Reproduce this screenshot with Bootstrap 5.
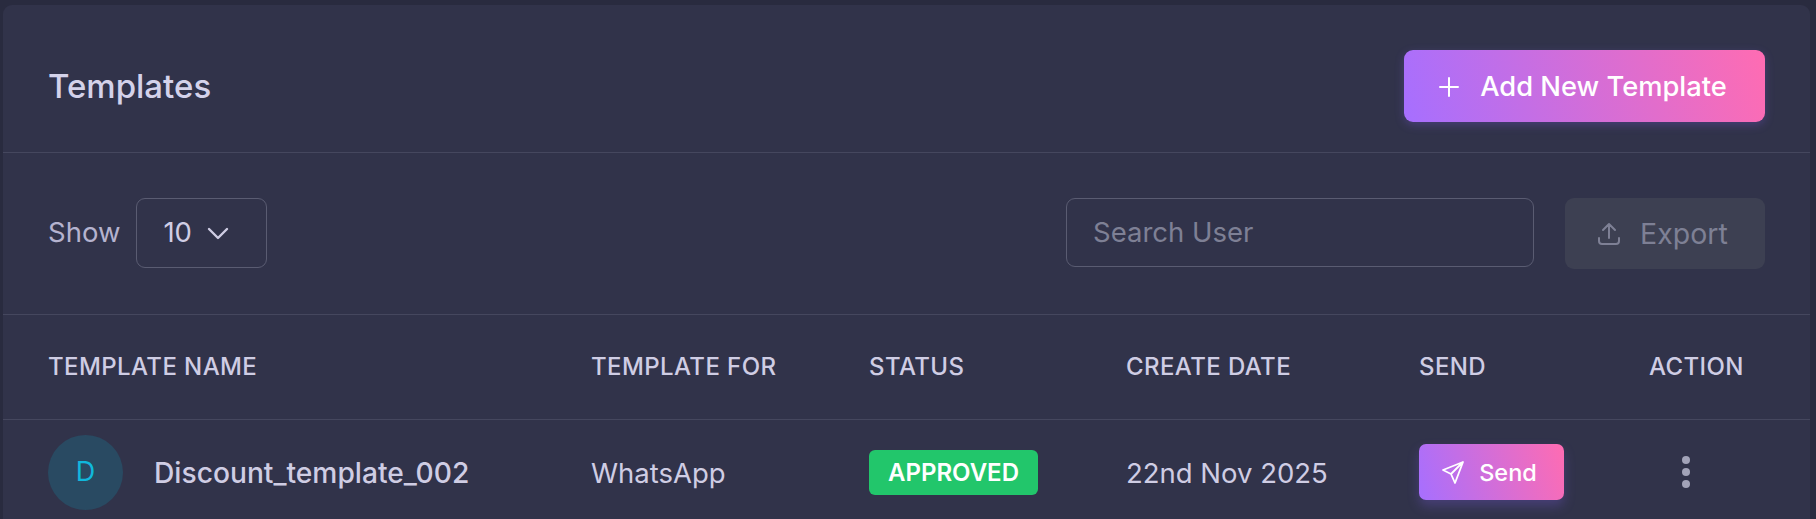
<!DOCTYPE html>
<html lang="en">
<head>
  <meta charset="UTF-8" />
  <meta name="viewport" content="width=device-width, initial-scale=1.0" />
  <title>Templates</title>
  <link rel="stylesheet" href="https://cdn.jsdelivr.net/npm/bootstrap@5.3.0/dist/css/bootstrap.min.css" />
  <style>
    html, body { height: 100%; overflow: hidden; }
    body { background: #292b3f; font-family: Inter, "Liberation Sans", sans-serif; color: #cfcde4; padding: 5px 6px 0 3px; }
    .panel { background: #31334a; border: 0; border-radius: 9px 9px 0 0; color: #cfcde4; }
    .panel-head { height: 148px; padding: 15px 45px 0; border-bottom: 1px solid #45475e; }
    .panel-title { font-size: 33px; font-weight: 500; color: #d4d2ea; margin: 0; padding-top: 2px; }
    .grad-btn { background: linear-gradient(72deg, #a66fff, #ff6cb2); color: #fff; border: 0; font-weight: 500; }
    .grad-btn:hover { color: #fff; }
    .add-btn { width: 361px; height: 72px; padding: 2px 4px 0 0; font-size: 27.3px; border-radius: 9px; gap: 20px; box-shadow: 0 3px 10px rgba(140, 100, 255, .25); }
    .filter-bar { height: 162px; padding: 0 45px 1px; border-bottom: 1px solid #45475e; }
    .show-label { font-size: 27.5px; color: #b5b3cf; }
    .show-select { width: 131px; height: 70px; border: 1px solid #5a5c72; border-radius: 9px; padding-left: 26px; gap: 15px; font-size: 27.5px; color: #cfcde4; }
    .search-box { width: 468px; height: 69px; margin-bottom: 2px; background: transparent; border: 1px solid #5a5c72; border-radius: 9px; padding: 0 26px; font-size: 27.5px; color: #cfcde4; }
    .search-box::placeholder { color: #7e8095; }
    .search-box:focus { background: transparent; color: #cfcde4; border-color: #5a5c72; box-shadow: none; }
    .export-btn { width: 200px; height: 71px; margin-left: 31px; padding: 2px 0 0 32px; background: #3d4052; color: #7e8095; border: 0; border-radius: 9px; font-size: 28.5px; gap: 19px; }
    .tpl-table { table-layout: fixed; width: 100%; margin: 0; --bs-table-bg: transparent; --bs-table-color: #cfcde4; --bs-table-border-color: #45475e; }
    .tpl-table th { height: 104px; padding: 0; vertical-align: middle; font-size: 24px; font-weight: 500; color: #cfcde4; letter-spacing: .4px; }
    .tpl-table td { height: 106px; padding: 0; vertical-align: middle; font-size: 27.5px; border-bottom: 0; }
    .tpl-table th:first-child, .tpl-table td:first-child { padding-left: 45px; }
    .tpl-table td.text-cell { padding-top: 2px; }
    .name-cell { gap: 31px; font-weight: 500; font-size: 28.2px; }
    .name-text { padding-top: 2px; }
    .avatar-tile { width: 75px; height: 75px; background: #294a62; color: #10b8dc; font-size: 27px; font-weight: 400; }
    .status-pill { width: 169px; height: 45px; padding-top: 1px; background: #22c66b; color: #fff; border-radius: 6px; font-size: 24px; font-weight: 600; }
    .send-btn { width: 145px; height: 56px; padding: 0 4px 0 0; font-size: 23.5px; border-radius: 7px; gap: 15px; box-shadow: 0 6px 12px rgba(140, 100, 255, .25); }
    .dots-icon { margin-left: 32px; display: block; }
  </style>
</head>
<body>
  <div class="card panel">
    <div class="panel-head d-flex align-items-center justify-content-between">
      <h5 class="panel-title">Templates</h5>
      <button type="button" class="btn grad-btn add-btn d-flex align-items-center justify-content-center">
        <svg width="22" height="22" viewBox="0 0 22 22" fill="none" stroke="#fff" stroke-width="2" stroke-linecap="round"><path d="M11 2v18M2 11h18"/></svg>
        Add New Template
      </button>
    </div>

    <div class="filter-bar d-flex align-items-center justify-content-between">
      <div class="d-flex align-items-center gap-3">
        <span class="show-label">Show</span>
        <div class="show-select d-flex align-items-center">
          10
          <svg width="22" height="14" viewBox="0 0 22 14" fill="none" stroke="#cfcde4" stroke-width="2.4" stroke-linecap="round" stroke-linejoin="round"><path d="M2 3l9 9 9-9"/></svg>
        </div>
      </div>
      <div class="d-flex align-items-center">
        <input type="text" class="form-control search-box" placeholder="Search User" />
        <button type="button" class="btn export-btn d-flex align-items-center">
          <svg width="24" height="24" viewBox="0 0 24 24" fill="none" stroke="#7e8095" stroke-width="2" stroke-linecap="round" stroke-linejoin="round"><path d="M12 16V2M6 8l6-6 6 6M2 16v3a3 3 0 0 0 3 3h14a3 3 0 0 0 3-3v-3"/></svg>
          Export
        </button>
      </div>
    </div>

    <table class="table tpl-table">
      <colgroup>
        <col style="width: 588px" />
        <col style="width: 278px" />
        <col style="width: 257px" />
        <col style="width: 293px" />
        <col style="width: 230px" />
        <col />
      </colgroup>
      <thead>
        <tr>
          <th>TEMPLATE NAME</th>
          <th>TEMPLATE FOR</th>
          <th>STATUS</th>
          <th>CREATE DATE</th>
          <th>SEND</th>
          <th>ACTION</th>
        </tr>
      </thead>
      <tbody>
        <tr>
          <td>
            <div class="name-cell d-flex align-items-center">
              <div class="avatar-tile rounded-circle d-flex align-items-center justify-content-center">D</div>
              <span class="name-text">Discount_template_002</span>
            </div>
          </td>
          <td class="text-cell">WhatsApp</td>
          <td><span class="status-pill d-inline-flex align-items-center justify-content-center">APPROVED</span></td>
          <td class="text-cell">22nd Nov 2025</td>
          <td>
            <button type="button" class="btn grad-btn send-btn d-flex align-items-center justify-content-center">
              <svg width="22" height="23" viewBox="0 0 22 23" fill="none" stroke="#fff" stroke-width="1.8" stroke-linejoin="round"><path d="M21 1L1 9l8 4 4 9zM21 1L9 13"/></svg>
              Send
            </button>
          </td>
          <td>
            <svg class="dots-icon" width="10" height="32" viewBox="0 0 10 32" fill="#a2a3b8"><circle cx="5" cy="4" r="4"/><circle cx="5" cy="16" r="4"/><circle cx="5" cy="28" r="4"/></svg>
          </td>
        </tr>
      </tbody>
    </table>
  </div>
</body>
</html>
